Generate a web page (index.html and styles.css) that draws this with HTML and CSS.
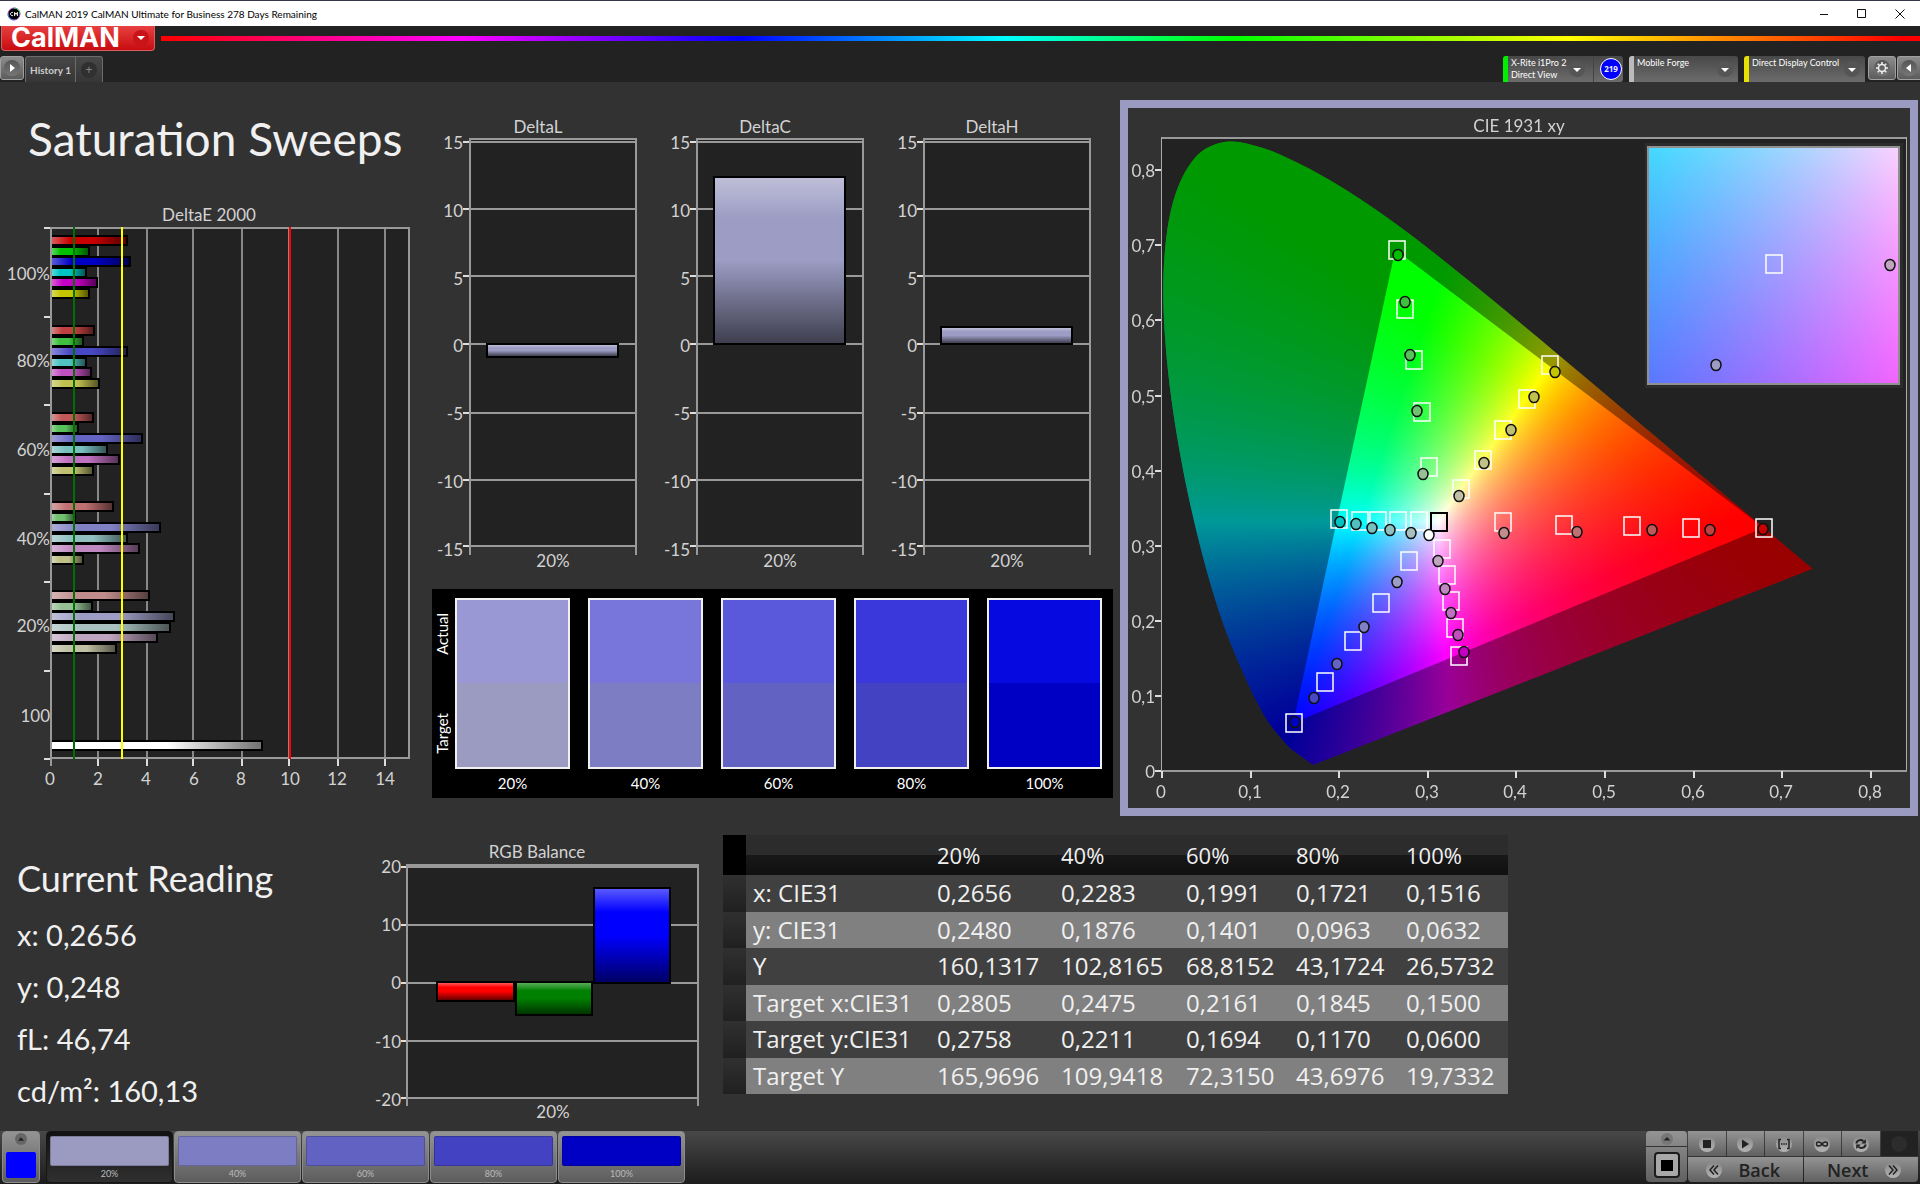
FILE: index.html
```html
<!DOCTYPE html>
<html lang="en">
<head>
<meta charset="utf-8">
<title>CalMAN 2019 CalMAN Ultimate for Business 278 Days Remaining</title>
<link rel="stylesheet" href="styles.css">
</head>
<body>
<header class="titlebar">
  <svg class="app-icon" viewBox="0 0 14 14" aria-hidden="true">
    <circle cx="7" cy="7" r="6" fill="#000" stroke="#a050c0"/>
    <path d="M7 1a6 6 0 0 1 6 6" fill="none" stroke="#30c060"/>
    <path d="M7 13a6 6 0 0 1-6-6" fill="none" stroke="#3080e0"/>
    <path d="M6 5.5a1.7 1.7 0 1 0 0 3M7.6 9V5.4l1.4 2 1.4-2V9" fill="none" stroke="#fff"/>
  </svg>
  <span class="window-title">CalMAN 2019 CalMAN Ultimate for Business 278 Days Remaining</span>
  <div class="window-buttons">
    <button aria-label="Minimize"><svg viewBox="0 0 10 10"><path d="M1 5.5h8"/></svg></button>
    <button aria-label="Maximize"><svg viewBox="0 0 10 10"><path d="M.5 .5h8v8h-8z"/></svg></button>
    <button aria-label="Close"><svg viewBox="0 0 10 10"><path d="M.5 .5l9 9M9.5 .5l-9 9"/></svg></button>
  </div>
</header>

<div class="brandbar">
  <button class="brand">CalMAN<span class="knob knob-red"><svg viewBox="0 0 16 16"><path d="M4 6h8l-4 4z"/></svg></span></button>
  <div class="rainbow"></div>
</div>

<nav class="tabbar">
  <button class="square-btn" aria-label="Expand"><span class="knob"><svg viewBox="0 0 16 16"><path d="M6 4v8l5-4z"/></svg></span></button>
  <div class="tabs">
    <button class="tab">History 1</button>
    <button class="tab tab-add" aria-label="Add history"><span class="knob knob-dark">+</span></button>
  </div>
  <div class="devices">
    <div class="device-group">
      <button class="device meter"><span class="device-name">X-Rite i1Pro 2<br>Direct View</span><span class="knob knob-dim"><svg viewBox="0 0 16 16"><path d="M4 7h8l-4 4z"/></svg></span></button>
      <span class="badge">219</span>
    </div>
    <button class="device source"><span class="device-name">Mobile Forge</span><span class="knob knob-dim"><svg viewBox="0 0 16 16"><path d="M4 7h8l-4 4z"/></svg></span></button>
    <button class="device display"><span class="device-name">Direct Display Control</span><span class="knob knob-dim"><svg viewBox="0 0 16 16"><path d="M4 7h8l-4 4z"/></svg></span></button>
    <div class="device-tools">
      <button class="square-btn gear" aria-label="Settings"><span class="knob"><svg viewBox="0 0 16 16"><circle cx="8" cy="8" r="3.5" fill="none" stroke="#eee" stroke-width="1.5"/><path d="M8 2v2M8 12v2M2 8h2M12 8h2M3.8 3.8l1.3 1.3M10.9 10.9l1.3 1.3M3.8 12.2l1.3-1.3M10.9 5.1l1.3-1.3" stroke="#eee" stroke-width="1.6"/></svg></span></button>
      <button class="square-btn collapse" aria-label="Collapse"><span class="knob"><svg viewBox="0 0 16 16"><path d="M10 4v8l-5-4z"/></svg></span></button>
    </div>
  </div>
</nav>

<main class="workspace">
  <div class="upper">
    <section class="sweeps">
      <h1>Saturation Sweeps</h1>
      <svg id="delta-e" class="chart" viewBox="0 200 430 616" role="img" aria-label="DeltaE 2000"></svg>
    </section>
    <section class="middle">
      <div class="deltas">
        <svg id="delta-l" class="chart" viewBox="0 100 227 489" role="img" aria-label="DeltaL"></svg>
        <svg id="delta-c" class="chart" viewBox="0 100 227 489" role="img" aria-label="DeltaC"></svg>
        <svg id="delta-h" class="chart" viewBox="0 100 227 489" role="img" aria-label="DeltaH"></svg>
      </div>
      <div class="swatches">
        <div class="swatch-side"><span>Actual</span><span>Target</span></div>
        <figure class="swatch s20"><div></div><figcaption>20%</figcaption></figure>
        <figure class="swatch s40"><div></div><figcaption>40%</figcaption></figure>
        <figure class="swatch s60"><div></div><figcaption>60%</figcaption></figure>
        <figure class="swatch s80"><div></div><figcaption>80%</figcaption></figure>
        <figure class="swatch s100"><div></div><figcaption>100%</figcaption></figure>
      </div>
    </section>
    <section class="cie">
      <canvas id="gamut" width="782" height="700"></canvas>
      <svg id="cie-chart" class="chart" viewBox="1128 108 782 700" role="img" aria-label="CIE 1931 xy"></svg>
    </section>
  </div>

  <div class="lower">
    <section class="reading">
      <h2>Current Reading</h2>
      <p>x: 0,2656</p>
      <p>y: 0,248</p>
      <p>fL: 46,74</p>
      <p>cd/m²: 160,13</p>
    </section>
    <svg id="rgb-balance" class="chart" viewBox="370 835 353 296" role="img" aria-label="RGB Balance"></svg>
    <table class="results">
      <colgroup><col class="c-mark"><col class="c-name"><col class="c-20"><col class="c-40"><col class="c-60"><col class="c-80"><col class="c-100"></colgroup>
      <thead>
        <tr><td class="mark"></td><th></th><th>20%</th><th>40%</th><th>60%</th><th>80%</th><th>100%</th></tr>
      </thead>
      <tbody>
        <tr><td class="mark"></td><th>x: CIE31</th><td>0,2656</td><td>0,2283</td><td>0,1991</td><td>0,1721</td><td>0,1516</td></tr>
        <tr><td class="mark"></td><th>y: CIE31</th><td>0,2480</td><td>0,1876</td><td>0,1401</td><td>0,0963</td><td>0,0632</td></tr>
        <tr><td class="mark"></td><th>Y</th><td>160,1317</td><td>102,8165</td><td>68,8152</td><td>43,1724</td><td>26,5732</td></tr>
        <tr><td class="mark"></td><th>Target x:CIE31</th><td>0,2805</td><td>0,2475</td><td>0,2161</td><td>0,1845</td><td>0,1500</td></tr>
        <tr><td class="mark"></td><th>Target y:CIE31</th><td>0,2758</td><td>0,2211</td><td>0,1694</td><td>0,1170</td><td>0,0600</td></tr>
        <tr><td class="mark"></td><th>Target Y</th><td>165,9696</td><td>109,9418</td><td>72,3150</td><td>43,6976</td><td>19,7332</td></tr>
      </tbody>
    </table>
  </div>
</main>

<footer class="footer">
  <button class="color-toggle" aria-label="Patch color">
    <svg viewBox="0 0 10 10"><circle cx="5" cy="5" r="5" fill="#666"/><path d="M2.5 6.5h5L5 3.5z" fill="#222"/></svg>
    <span></span>
  </button>
  <div class="patches">
    <button class="patch s20 selected"><span></span>20%</button>
    <button class="patch s40"><span></span>40%</button>
    <button class="patch s60"><span></span>60%</button>
    <button class="patch s80"><span></span>80%</button>
    <button class="patch s100"><span></span>100%</button>
  </div>
  <div class="transport">
    <div class="mode">
      <button class="mode-up" aria-label="Show more"><svg viewBox="0 0 16 12"><circle cx="8" cy="6" r="6" fill="#777"/><path d="M4.5 7.5h7L8 4z" fill="#222"/></svg></button>
      <button class="mode-main" aria-label="Pattern window"><svg viewBox="0 0 26 26"><rect x="1" y="1" width="24" height="24" rx="3" fill="#a8a8a8" stroke="#1c1c1c" stroke-width="2"/><path d="M7 8h12v11H7z" fill="#000"/></svg></button>
    </div>
    <div class="steps">
      <button aria-label="Stop"><span class="knob knob-light"><svg viewBox="0 0 16 16"><path d="M4 4h8v8H4z"/></svg></span></button>
      <button aria-label="Play"><span class="knob knob-light"><svg viewBox="0 0 16 16"><path d="M5 3.5v9l7-4.5z"/></svg></span></button>
      <button aria-label="Play range"><span class="knob knob-light"><svg viewBox="0 0 16 16"><path d="M5 3.5H3v9h2M11 3.5h2v9h-2M5 8h1.5M7.3 8h1.5M9.6 8H11" class="line heavy"/></svg></span></button>
      <button aria-label="Continuous"><span class="knob knob-light"><svg viewBox="0 0 16 16"><path d="M8 8C6.5 5.5 2.5 5 2.5 8S6.5 10.5 8 8s5.5-3 5.5 0S9.5 10.5 8 8z" class="line heavy"/></svg></span></button>
      <button aria-label="Refresh"><span class="knob knob-light"><svg viewBox="0 0 16 16"><path d="M3.5 7.5c0-3 4-4.5 7-2.5M12.5 8.5c0 3-4 4.5-7 2.5" class="line thick"/><path d="M12.8 3v4.5H8.3zM3.2 13V8.5h4.5z"/></svg></span></button>
      <button class="idle" aria-label="Status" disabled><span class="knob knob-off"></span></button>
      <button class="wide"><span class="knob knob-light"><svg viewBox="0 0 16 16"><path d="M8 3.5L4 8l4 4.5M12 3.5L8 8l4 4.5" class="line heavy"/></svg></span>Back</button>
      <button class="wide wide-next">Next<span class="knob knob-light"><svg viewBox="0 0 16 16"><path d="M4 3.5L8 8l-4 4.5M8 3.5L12 8l-4 4.5" class="line heavy"/></svg></span></button>
    </div>
  </div>
</footer>
<script src="script.js"></script>
</body>
</html>
```
FILE: styles.css
```css
* { box-sizing: border-box; }
body {
  margin: 0;
  min-height: 100vh;
  display: flex;
  flex-direction: column;
  background: #323232;
  color: #f0f0f0;
  font-family: Lato, "Open Sans", sans-serif;
}
button { font: inherit; color: inherit; border: 0; padding: 0; margin: 0; background: none; }
h1, h2, p, figure { margin: 0; font-weight: 400; }
svg { display: block; }

/* window title */
.titlebar {
  height: 26px;
  display: flex;
  align-items: center;
  gap: 4px;
  padding-left: 7px;
  background: #fff;
  color: #000;
  border-top: 1px solid #34384a;
}
.app-icon { width: 14px; height: 14px; }
.window-title { font-size: 10px; line-height: 16px; flex: 1; }
.window-buttons { display: flex; margin-right: 1px; }
.window-buttons button { width: 38px; height: 24px; display: grid; place-items: center; }
.window-buttons svg { width: 10px; height: 10px; fill: none; stroke: #111; }

/* brand strip */
.brandbar { height: 27px; display: flex; gap: 6px; background: #222; align-items: flex-start; }
.brand {
  width: 154px;
  height: 25px;
  margin-left: 1px;
  padding: 0 5px 0 9px;
  display: flex;
  align-items: center;
  justify-content: space-between;
  background: linear-gradient(#e84040, #c80c10);
  border: 1px solid #d86060;
  border-top: 0;
  border-radius: 0 0 4px 4px;
  font: 700 27px/26px Inter, sans-serif;
  color: #fff;
}
.rainbow {
  flex: 1;
  height: 5px;
  margin-top: 10px;
  background: linear-gradient(90deg, #f00, #f0f 17%, #00f 33%, #0ff 48%, #0f0 61%, #ff0 80%, #f00 99%);
}

/* round inset behind small glyphs */
.knob {
  flex: none;
  width: 16px;
  height: 16px;
  border-radius: 50%;
  display: grid;
  place-items: center;
  background: linear-gradient(#555, #777);
}
.knob svg { width: 16px; height: 16px; fill: #fff; }
.knob-red { background: #c81418; }
.knob-dark { background: #303030; font: 12px/16px "Open Sans", sans-serif; color: #888; }
.knob-dim { background: #555; }
.knob-light { background: linear-gradient(#888, #b4b4b4); }
.knob-light svg { fill: #222; }
.knob-off { background: #2c2c2c; }
.knob .line { fill: none; stroke: #222; }
.heavy { stroke-width: 1.5; }
.thick { stroke-width: 2; }

/* tabs and devices */
.tabbar { height: 29px; padding-top: 3px; display: flex; background: #222; align-items: flex-start; overflow: hidden; }
.square-btn {
  width: 24px;
  height: 24px;
  display: grid;
  place-items: center;
  background: linear-gradient(#8c8c8c, #5c5c5c);
  border: 1px solid #a0a0a0;
  border-radius: 3px;
}
.tabs { display: flex; margin-left: 1px; height: 26px; border: 1px solid #6c6c6c; border-bottom: 0; border-radius: 3px 3px 0 0; background: linear-gradient(#484848, #363636); }
.tab { width: 49px; font-size: 10px; line-height: 24px; font-weight: 700; color: #ccc; }
.tab-add { width: 27px; display: grid; place-items: center; border-left: 1px solid #6c6c6c; }
.devices { margin-left: auto; display: flex; gap: 6px; }
.device-group { display: flex; width: 120px; border-radius: 3px; background: linear-gradient(#484848, #6c6c6c); }
.device {
  height: 26px;
  display: flex;
  align-items: center;
  justify-content: space-between;
  padding: 0 5px 0 3px;
  border-left: 5px solid;
  border-radius: 3px 3px 0 0;
  background: linear-gradient(#484848, #6c6c6c);
  text-align: left;
}
.device-name { align-self: flex-start; font-size: 9px; line-height: 12px; padding-top: 1px; color: #fff; white-space: nowrap; }
.meter { width: 91px; padding-right: 8px; border-left-color: #0e0; border-right: 1px solid #444; }
.source { width: 109px; border-left-color: #bbb; }
.display { width: 121px; border-left-color: #e8e000; }
.badge {
  width: 22px;
  height: 22px;
  margin: 2px 0 0 6px;
  border: 1px solid #fff;
  border-radius: 50%;
  background: #00f;
  font: 700 8px/20px "Open Sans", sans-serif;
  text-align: center;
}
.device-tools { display: flex; gap: 1px; margin-left: -3px; }
.gear { width: 28px; }
.collapse { width: 23px; border-radius: 3px 0 0 3px; border-right: 0; }

/* workspace */
.workspace { flex: 1; display: flex; flex-direction: column; }
.upper { display: grid; grid-template-columns: 430fr 690fr 800fr; align-items: start; }
.sweeps h1 { height: 118px; padding-left: 28px; font-size: 46px; line-height: 114px; white-space: nowrap; }
.chart { width: 100%; height: auto; }
.chart text { font-family: Lato, sans-serif; font-size: 17px; fill: #d2d2d2; }
.chart .end { text-anchor: end; }
.chart .mid { text-anchor: middle; }
.middle { padding-top: 18px; }
.deltas { display: grid; grid-template-columns: repeat(3, 1fr); margin-right: 9px; }
.swatches {
  display: grid;
  grid-template-columns: 5px repeat(5, 1fr);
  gap: 18px;
  margin: 0 7px 0 2px;
  height: 209px;
  padding: 9px 11px 0 0;
  background: #000;
  color: #fff;
}
.swatch-side { display: flex; flex-direction: column; justify-content: space-between; align-items: center; width: 20px; height: 171px; padding: 15px 0; }
.swatch-side span { writing-mode: vertical-rl; transform: rotate(180deg); font-size: 15px; line-height: 20px; }
.swatch div { height: 171px; border: 2px solid #f0f0f0; background: linear-gradient(var(--actual) 50%, var(--target) 50%); }
.swatch figcaption { font-size: 15px; line-height: 28px; text-align: center; }
.s20 { --actual: #9a98d4; --target: #9b9bc1; }
.s40 { --actual: #7876da; --target: #7d7dc3; }
.s60 { --actual: #5b59db; --target: #6262c3; }
.s80 { --actual: #3b38db; --target: #4242c3; }
.s100 { --actual: #0609e0; --target: #0000c4; }

.cie { margin: 18px 2px 0 0; display: grid; border: 8px solid #9b9bc1; }
.cie > * { grid-area: 1 / 1; width: 100%; }
.cie canvas { height: auto; }

/* readings */
.lower { display: grid; grid-template-columns: 370fr 353fr 785fr 412fr; padding-top: 19px; align-items: start; }
.reading { padding: 17px 0 0 17px; white-space: nowrap; }
.reading h2 { font-size: 36px; line-height: 52px; }
.reading p { font-size: 29px; line-height: 52px; }
.reading h2 + p { margin-top: 5px; }
.results { width: 100%; height: 259px; table-layout: fixed; border-collapse: collapse; font: 24px/32px "Open Sans", sans-serif; }
.results th, .results td { padding: 0 0 0 7px; text-align: left; font-weight: 400; white-space: nowrap; }
.results thead tr { height: 40px; background: linear-gradient(#2c2c2c 50%, #181818 50%, #101010); }
.results thead th { font-size: 22px; }
.results tbody tr { background: #404040; }
.results tbody tr:nth-child(even) { background: #808080; }
.results .mark { background: linear-gradient(#303030, #202020); }
.results thead .mark { background: #000; }
.c-mark { width: 23px; }
.c-name { width: 184px; }
.c-20 { width: 124px; }
.c-40 { width: 125px; }
.c-60, .c-80 { width: 110px; }
.c-100 { width: 109px; }

/* footer */
.footer { height: 53px; display: flex; align-items: flex-start; padding: 0 2px; background: linear-gradient(#484848, #1c1c1c); }
.color-toggle, .patch {
  height: 52px;
  border: 1px solid #8c8c8c;
  border-radius: 4px;
  background: linear-gradient(#949494, #5c5c5c);
}
.color-toggle { width: 38px; display: flex; flex-direction: column; align-items: center; justify-content: space-between; padding: 1px 3px 4px; }
.color-toggle svg { width: 12px; height: 12px; }
.color-toggle span { width: 30px; height: 26px; border-radius: 2px; background: #00f; }
.patches { display: flex; gap: 1px; margin-left: 6px; }
.patch { width: 127px; padding: 4px 3px 0; display: flex; flex-direction: column; justify-content: flex-start; font-size: 9px; line-height: 16px; color: #bbb; align-items: stretch; text-align: center; }
.patch span { height: 31px; border-radius: 2px; border: 1px solid #0003; background: var(--target); }
.patch.selected { background: linear-gradient(#111, #303030); border-color: #161616; }
.transport { margin-left: auto; display: flex; gap: 1px; }
.mode { width: 41px; display: flex; flex-direction: column; border-radius: 4px; overflow: hidden; background: linear-gradient(#949494, #606060); }
.mode button { display: grid; place-items: center; }
.mode-up { height: 16px; border-bottom: 1px solid #333; }
.mode-up svg { width: 16px; height: 12px; }
.mode-main { height: 35px; }
.mode-main svg { width: 26px; height: 26px; }
.steps { width: 230px; display: grid; grid-template-columns: repeat(6, 1fr); gap: 1px; }
.steps button { height: 25px; display: flex; align-items: center; justify-content: center; background: linear-gradient(#949494, #606060); }
.steps .idle { background: #222; }
.steps .wide { grid-column: span 3; gap: 16px; padding-right: 4px; font: 600 18px/24px "Open Sans", sans-serif; color: #222; border-radius: 0 0 0 4px; }
.steps .wide-next { padding: 0 0 0 6px; border-radius: 0 0 4px 0; }
```
FILE: script.js
```js
const SHADES = `
<defs>
  <linearGradient id="across">
    <stop offset="0" stop-color="#fff" stop-opacity=".35"/><stop offset=".25" stop-color="#fff" stop-opacity="0"/>
    <stop offset=".55" stop-color="#000" stop-opacity="0"/><stop offset="1" stop-color="#000" stop-opacity=".55"/>
  </linearGradient>
  <linearGradient id="down" x2="0" y2="1">
    <stop offset="0" stop-color="#fff" stop-opacity=".35"/><stop offset=".25" stop-color="#fff" stop-opacity="0"/>
    <stop offset=".5" stop-color="#000" stop-opacity="0"/><stop offset="1" stop-color="#000" stop-opacity=".6"/>
  </linearGradient>
</defs>`;

const rect = (x, y, w, h, fill) => `<rect x="${x}" y="${y}" width="${w}" height="${h}" fill="${fill}"/>`;
const text = (x, y, cls, s) => `<text x="${x}" y="${y}" class="${cls}">${s}</text>`;
const hline = (x, y, w, c = '#999') => rect(x, y, w, 2, c);
const vline = (x, y, h, c = '#999') => rect(x, y, 2, h, c);

function bar(x, y, w, h, color, shade) {
  return rect(x, y, w, h, '#000') +
    rect(x + 2, y + 2, w - 4, h - 4, color) +
    rect(x + 2, y + 2, w - 4, h - 4, `url(#${shade})`);
}

const COLORS = {
  100: ['#c80000', '#00c000', '#0000c4', '#00c4c4', '#c400c4', '#c4c400'],
  80: ['#c04040', '#40c040', '#4848c4', '#50c0c0', '#c050c0', '#c0c050'],
  60: ['#c05858', '#58c058', '#6464c4', '#78c0c0', '#c070c0', '#c0c070'],
  40: ['#c07070', '#70c070', '#8080c4', '#90c0c0', '#c088c0', '#c0c088'],
  20: ['#c08c8c', '#94c094', '#9c9cc4', '#a8c0c0', '#c0a4c0', '#c0c0a4']
};

function drawDeltaE() {
  const groups = [
    [100, 235, [128, 90, 131, 87, 98, 90]],
    [80, 325, [95, 84, 128, 87, 92, 100]],
    [60, 412, [94, 79, 143, 108, 120, 94]],
    [40, 501, [114, 76, 161, 128, 140, 84]],
    [20, 590, [150, 93, 175, 171, 158, 117]]
  ];
  let s = SHADES + '<g shape-rendering="crispEdges">' + rect(50, 227, 360, 532, '#222');
  [97, 146, 192, 241, 288, 337, 384].forEach(x => s += vline(x, 228, 530, '#888') + vline(x, 758, 8, '#ddd'));
  for (let i = 0; i < 7; i++) s += hline(44, Math.round(227 + i * 88.5), 6, '#ddd');
  groups.forEach(([level, top, ends]) => ends.forEach((end, i) =>
    s += bar(50, Math.round(top + i * 10.5), end - 50, 11, COLORS[level][i], 'across')));
  s += bar(50, 740, 213, 11, '#fff', 'across');
  s += hline(50, 227, 360) + hline(50, 757, 360) + vline(50, 227, 539) + vline(408, 227, 532);
  s += vline(73, 227, 532, '#007000') + vline(121, 227, 532, '#ff0') + vline(289, 227, 532, '#f00') + '</g>';
  s += text(209, 221, 'mid', 'DeltaE 2000');
  [['100%', 280], ['80%', 367], ['60%', 456], ['40%', 545], ['20%', 632], ['100', 722]].forEach(([t, y]) => s += text(50, y, 'end', t));
  [50, 98, 146, 194, 241, 290, 337, 385].forEach((x, i) => s += text(x, 785, 'mid', i * 2));
  document.getElementById('delta-e').innerHTML = s;
}

function drawDelta(id, title, y, h) {
  const lines = [142, 209, 276, 344, 413, 480, 546];
  let s = SHADES + '<g shape-rendering="crispEdges">' + rect(40, 139, 167, 408, '#222');
  lines.forEach(t => s += hline(33, t - 1, 7, '#ddd') + hline(40, t - 1, 167));
  s += hline(40, 138, 167) + vline(39, 138, 417) + vline(205, 138, 417);
  s += bar(56, y, 133, h, '#9c9cc4', 'down') + '</g>';
  s += text(108, 133, 'mid', title) + text(123, 567, 'mid', '20%');
  lines.forEach((t, i) => s += text(33, Math.round(149 + i * 67.8), 'end', 15 - i * 5));
  document.getElementById(id).innerHTML = s;
}

function drawBalance() {
  const lines = [867, 925, 983, 1041, 1098];
  let s = SHADES + '<g shape-rendering="crispEdges">' + rect(407, 864, 292, 234, '#222') + hline(407, 864, 292);
  lines.forEach(t => s += hline(401, t - 1, 6, '#ddd') + hline(407, t - 1, 292));
  s += vline(406, 864, 242) + vline(697, 864, 242);
  s += bar(436, 981, 79, 21, '#f00', 'down') + bar(515, 981, 78, 35, '#008000', 'down') + bar(593, 887, 78, 97, '#00f', 'down') + '</g>';
  s += text(537, 858, 'mid', 'RGB Balance') + text(553, 1118, 'mid', '20%');
  lines.forEach((t, i) => s += text(401, Math.round(873 + i * 58.2), 'end', 20 - i * 10));
  document.getElementById('rgb-balance').innerHTML = s;
}

// Plot scale of the chromaticity chart
const X0 = 1160, Y0 = 768, KX = 888, KY = 751;
const px = x => X0 + KX * x;
const py = y => Y0 - KY * y;

const LOCUS = [[.1741,.005],[.1733,.0048],[.1714,.0051],[.1689,.0069],[.1644,.0109],[.1566,.0177],[.144,.0297],
  [.1241,.0578],[.1096,.0868],[.0913,.1327],[.0687,.2007],[.0454,.295],[.0235,.4127],[.0082,.5384],[.0039,.6548],
  [.0139,.7502],[.0389,.812],[.0743,.8338],[.1142,.8262],[.1547,.8059],[.1929,.7816],[.2296,.7543],[.2658,.7243],
  [.3016,.6923],[.3373,.6589],[.3731,.6245],[.4087,.5896],[.4441,.5547],[.4788,.5202],[.5125,.4866],[.5448,.4544],
  [.5752,.4242],[.6029,.3965],[.627,.3725],[.6482,.3514],[.6658,.334],[.6915,.3083],[.7079,.292],[.726,.274],[.7347,.2653]];

// Brightest linear RGB of a chromaticity, negative channels cut off
function xyColor(x, y) {
  const X = x / y, Z = (1 - x - y) / y;
  const c = [
    3.2406 * X - 1.5372 - .4986 * Z,
    -.9689 * X + 1.8758 + .0415 * Z,
    .0557 * X - .204 + 1.057 * Z
  ].map(v => Math.max(0, v));
  const m = Math.max(...c);
  return c.map(v => 255 * v / m);
}

function shaded(w, h, toXY) {
  const c = document.createElement('canvas');
  c.width = w; c.height = h;
  const ctx = c.getContext('2d'), img = ctx.createImageData(w, h);
  for (let j = 0; j < h; j++) for (let i = 0; i < w; i++) {
    const [x, y] = toXY(i, j), k = 4 * (j * w + i);
    const rgb = xyColor(x, Math.max(y, .002));
    img.data[k] = rgb[0]; img.data[k + 1] = rgb[1]; img.data[k + 2] = rgb[2]; img.data[k + 3] = 255;
  }
  ctx.putImageData(img, 0, 0);
  return c;
}

function drawGamut() {
  const ctx = document.getElementById('gamut').getContext('2d');
  ctx.translate(-1128, -108);
  ctx.fillStyle = '#222';
  ctx.fillRect(1162, 138, 745, 633);
  const full = shaded(782, 700, (i, j) => [(i + 1128 - X0) / KX, (Y0 - j - 108) / KY]);

  const p = LOCUS.map(([x, y]) => [px(x), py(y)]);
  const path = new Path2D();
  path.moveTo(...p[0]);
  for (let i = 0; i < p.length - 1; i++) {
    const a = p[Math.max(0, i - 1)], b = p[i], c = p[i + 1], d = p[Math.min(p.length - 1, i + 2)];
    path.bezierCurveTo(b[0] + (c[0] - a[0]) / 6, b[1] + (c[1] - a[1]) / 6, c[0] - (d[0] - b[0]) / 6, c[1] - (d[1] - b[1]) / 6, c[0], c[1]);
  }
  path.closePath();
  ctx.save();
  ctx.clip(path);
  ctx.drawImage(full, 1128, 108);
  ctx.fillStyle = 'rgba(0,0,0,.4)';
  ctx.fillRect(1128, 108, 782, 700);
  const tri = new Path2D();
  tri.moveTo(px(.68), py(.32));
  tri.lineTo(px(.265), py(.69));
  tri.lineTo(px(.15), py(.06));
  tri.closePath();
  ctx.clip(tri);
  ctx.drawImage(full, 1128, 108);
  ctx.restore();

  // magnified view round the selected target
  ctx.fillStyle = '#2c2c2c';
  ctx.fillRect(1645, 143, 258, 245);
  ctx.fillStyle = '#909090';
  ctx.fillRect(1647, 146, 253, 239);
  ctx.drawImage(shaded(249, 235, (i, j) => [.2805 + (i - 125) / 3906, .2758 - (j - 117) / 3597]), 1649, 148);
}

function drawCie() {
  const squares = [[1339,519],[1360,521],[1378,521],[1398,521],[1419,521],[1503,522],[1564,525],[1632,526],[1691,528],[1764,528],
    [1442,549],[1447,575],[1451,601],[1455,628],[1459,656],[1409,561],[1381,603],[1353,641],[1325,682],[1294,723],
    [1429,467],[1422,412],[1414,360],[1405,309],[1397,250],[1461,489],[1483,460],[1503,430],[1527,399],[1550,365],[1774,264]];
  const circles = {
    100: [[1763,529],[1398,255],[1295,722],[1340,522],[1464,652],[1555,372]],
    80: [[1710,530],[1405,302],[1314,698],[1356,524],[1458,635],[1534,397]],
    60: [[1652,530],[1410,355],[1337,664],[1372,528],[1451,613],[1511,430]],
    40: [[1577,532],[1417,411],[1364,627],[1390,530],[1445,589],[1484,463]],
    20: [[1504,533],[1423,474],[1397,582],[1411,533],[1438,561],[1459,496]]
  };
  let s = '<g shape-rendering="crispEdges">' + hline(1161, 137, 746) +
    rect(1161, 137, 1, 641, '#aaa') + rect(1906, 137, 1, 634, '#aaa') + hline(1161, 770, 746);
  for (let i = 0; i <= 8; i++) {
    s += vline(Math.round(1161 + i * 88.6), 771, 7, '#ddd') + hline(1155, Math.round(770 - i * 75.1), 6, '#ddd');
  }
  s += '</g>';
  for (let i = 0; i <= 8; i++) {
    const label = i ? '0,' + i : '0';
    s += text(Math.round(1161 + i * 88.6), 798, 'mid', label) + text(1155, Math.round(778 - i * 75.1), 'end', label);
  }
  s += text(1519, 132, 'mid', 'CIE 1931 xy');
  s += '<g fill="none" stroke="#fff" stroke-width="1.5">';
  squares.forEach(([x, y]) => s += `<rect x="${x - 8}" y="${y - 9}" width="16" height="18"/>`);
  s += '<rect x="1431" y="513" width="16" height="18" stroke="#000" stroke-width="2"/></g><g stroke="#111" stroke-width="1.5">';
  const dot = (x, y, f) => s += `<ellipse cx="${x}" cy="${y}" rx="5" ry="5.5" fill="${f}"/>`;
  for (const level in circles) circles[level].forEach(([x, y], i) => dot(x, y, COLORS[level][i]));
  dot(1429, 535, '#fff'); dot(1890, 265, '#c0a4c0'); dot(1716, 365, '#9c9cc4');
  s += '</g>';
  document.getElementById('cie-chart').innerHTML = s;
}

drawDeltaE();
drawDelta('delta-l', 'DeltaL', 343, 15);
drawDelta('delta-c', 'DeltaC', 176, 169);
drawDelta('delta-h', 'DeltaH', 326, 19);
drawBalance();
drawGamut();
drawCie();
```
